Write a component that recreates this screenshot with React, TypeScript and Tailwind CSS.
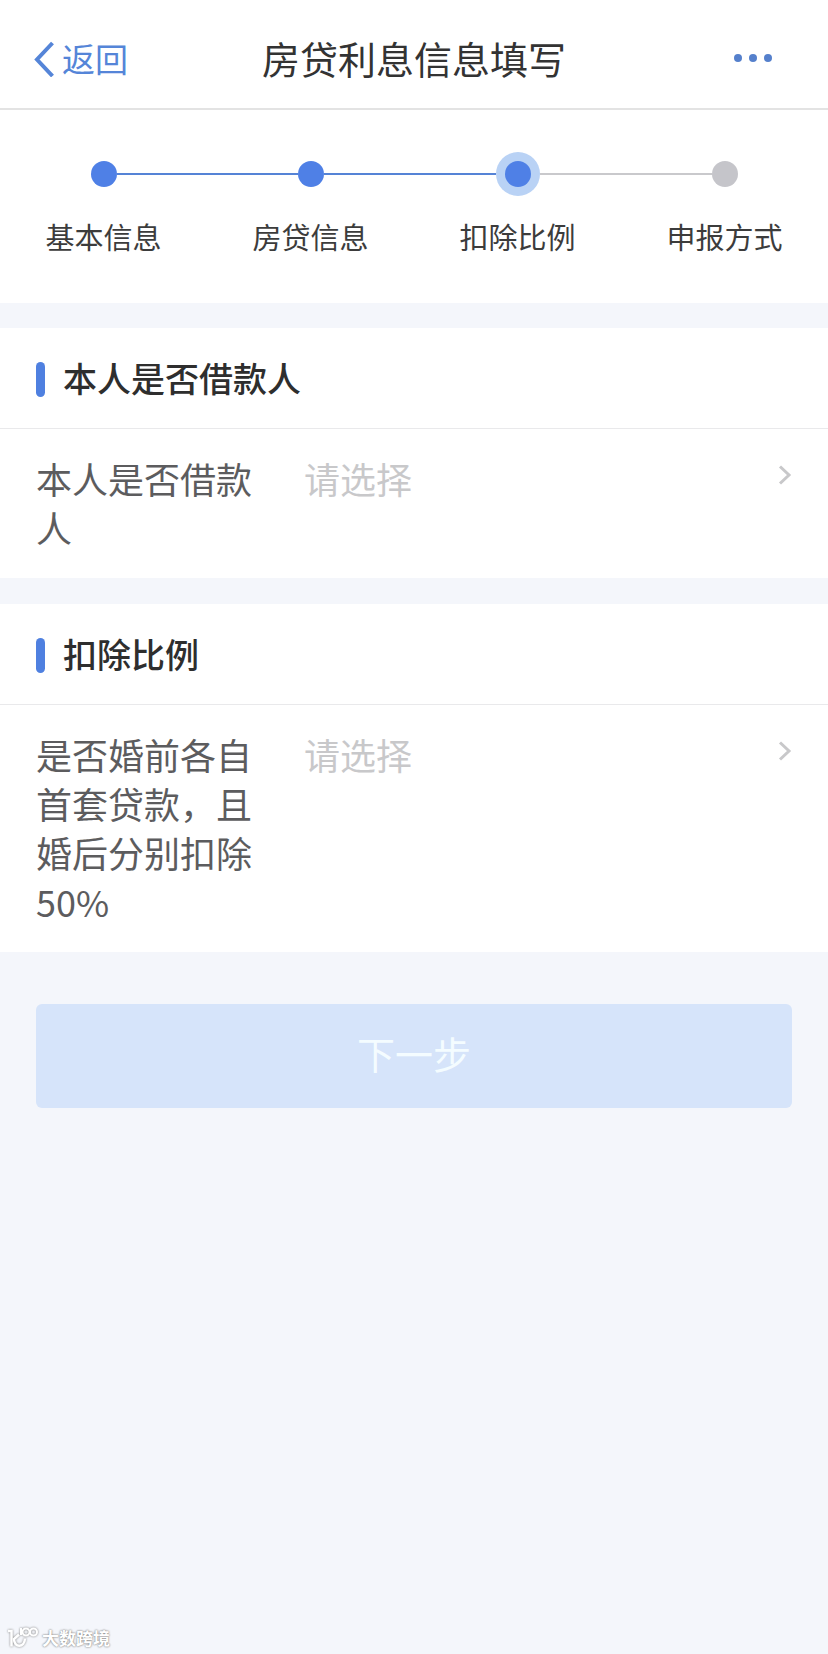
import { useState } from "react";

interface Step {
  label: string;
  status: "done" | "current" | "todo";
}

interface SelectSectionProps {
  id: string;
  title: string;
  label: string;
}

const steps: Step[] = [
  { label: "基本信息", status: "done" },
  { label: "房贷信息", status: "done" },
  { label: "扣除比例", status: "current" },
  { label: "申报方式", status: "todo" },
];

function lineColor(index: number) {
  // line that leads into the step at this index
  if (index === 0 || index >= steps.length) return "bg-transparent";
  return steps[index].status === "todo" ? "bg-[#c9c9cc]" : "bg-[#5583d6]";
}

function StepBar() {
  return (
    <ol className="grid grid-cols-4 bg-white pt-[42px] pb-[47px]">
      {steps.map((step, index) => (
        <li key={step.label} className="flex flex-col items-center">
          <div className="flex h-11 w-full items-center">
            <span className={`h-0.5 flex-1 ${lineColor(index)}`} />
            {step.status === "current" ? (
              <span className="flex size-11 items-center justify-center rounded-full bg-[#b9d2f5]">
                <span className="size-[26px] rounded-full bg-[#4f80e6]" />
              </span>
            ) : (
              <span
                className={`size-[26px] rounded-full ${
                  step.status === "done" ? "bg-[#4f80e6]" : "bg-[#c5c5ca]"
                }`}
              />
            )}
            <span className={`h-0.5 flex-1 ${lineColor(index + 1)}`} />
          </div>
          <span className="mt-5 text-[29px] leading-[40px] text-[#3c3c3c]">{step.label}</span>
        </li>
      ))}
    </ol>
  );
}

function SelectSection({ id, title, label }: SelectSectionProps) {
  const [value, setValue] = useState("");

  return (
    <section className="bg-white">
      <div className="flex h-[101px] items-center gap-[18px] border-b border-[#e9e9eb] px-9">
        <span className="mt-[3px] h-[35px] w-[9px] rounded-full bg-[#4f80e0]" />
        <h2 className="text-[34px] leading-[48px] font-medium text-[#2e2e2e]">{title}</h2>
      </div>
      <div className="flex items-start px-9 pt-[25px] pb-[26px]">
        <label
          htmlFor={id}
          className="mr-12 w-[220px] shrink-0 text-[36px] leading-[49px] text-[#5c5c5e]"
        >
          {label}
        </label>
        <select
          id={id}
          value={value}
          onChange={(e) => setValue(e.target.value)}
          className={`h-[49px] min-w-0 flex-1 appearance-none bg-transparent text-[36px] leading-[49px] outline-none ${
            value ? "text-[#3c3c3c]" : "text-[#c8c8ca]"
          }`}
        >
          <option value="">请选择</option>
          <option value="yes">是</option>
          <option value="no">否</option>
        </select>
        <svg
          className="mt-[11px] h-5 w-[14px] shrink-0"
          viewBox="0 0 14 20"
          fill="none"
          stroke="#c8c8ca"
          strokeWidth="3"
        >
          <polyline points="2,1.5 11,10 2,18.5" />
        </svg>
      </div>
    </section>
  );
}

export default function App() {
  return (
    <div className="flex min-h-screen flex-col bg-[#f4f6fb] font-['Noto_Sans_CJK_SC','Liberation_Sans',sans-serif]">
      {/* Nav bar */}
      <header className="grid grid-cols-[1fr_auto_1fr] items-center border-b-2 border-[#e3e3e3] bg-white px-[34px] pt-[30px] pb-[22px]">
        <button type="button" className="flex items-center gap-2 justify-self-start text-[#5585d8]">
          <svg
            className="h-[38px] w-5"
            viewBox="0 0 20 38"
            fill="none"
            stroke="currentColor"
            strokeWidth="4"
          >
            <polyline points="18.5,4 3,20.5 18.5,37" />
          </svg>
          <span className="text-[33px] leading-[56px]">返回</span>
        </button>
        <h1 className="text-[38px] leading-[56px] text-[#333333]">房贷利息信息填写</h1>
        <button
          type="button"
          aria-label="更多"
          className="flex h-14 items-center gap-[7px] justify-self-end px-[22px] text-[#5580cc]"
        >
          <span className="size-2 rounded-full bg-current" />
          <span className="size-2 rounded-full bg-current" />
          <span className="size-2 rounded-full bg-current" />
        </button>
      </header>

      <StepBar />

      <main className="mt-[25px] flex flex-col gap-[26px]">
        <SelectSection id="borrower" title="本人是否借款人" label="本人是否借款人" />
        <SelectSection
          id="ratio"
          title="扣除比例"
          label="是否婚前各自首套贷款，且婚后分别扣除50%"
        />
      </main>

      <div className="px-9 pt-[52px] pb-12">
        <button
          type="button"
          disabled
          className="h-[104px] w-full rounded-md bg-[#d6e4fa] pb-1.5 text-[38px] leading-[56px] text-[#f4fcff]"
        >
          下一步
        </button>
      </div>

      <footer className="mt-auto flex items-center gap-1 px-2 pb-1 text-white">
        <svg
          className="h-6 w-[30px] [filter:drop-shadow(0_0_1px_#808080)]"
          viewBox="0 0 30 24"
          fill="none"
          stroke="currentColor"
          strokeWidth="2.5"
        >
          <path d="M0 5h3.5v15.5" />
          <path d="M11 8.5L6 13c0 9 10.5 9 11-.5" />
          <path d="M13 2v7" strokeWidth="2" />
          <circle cx="18" cy="6" r="3.5" strokeWidth="2" />
          <circle cx="25.5" cy="6" r="3.5" strokeWidth="2" />
        </svg>
        <span className="text-[17px] leading-6 font-bold [text-shadow:0_0_2px_#8a8a8a,0_0_2px_#a0a0a0]">
          大数跨境
        </span>
      </footer>
    </div>
  );
}
